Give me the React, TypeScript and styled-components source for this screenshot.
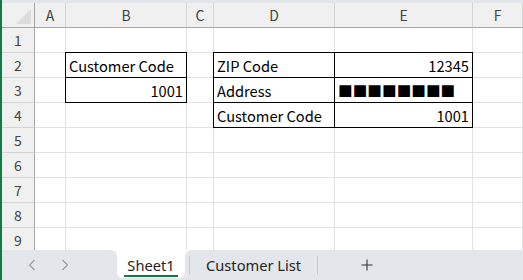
import { Fragment } from 'react';
import styled, { createGlobalStyle } from 'styled-components';

const colors = {
  excelGreen: '#107c41',
  chrome: '#e3e6ea',
  headerBg: '#f0f0f0',
  headerLine: '#a6a6a6',
  headerSep: '#d4d4d4',
  grid: '#e1e1e1',
  headerText: '#444444',
  cellText: '#000000',
  tabText: '#242424',
};

const GlobalStyle = createGlobalStyle`
  html, body {
    margin: 0;
    padding: 0;
    background: #ffffff;
  }
`;

const Window = styled.div`
  width: 523px;
  height: 280px;
  box-sizing: border-box;
  border-left: 2px solid ${colors.excelGreen};
  display: flex;
  flex-direction: column;
  overflow: hidden;
  background: #ffffff;
`;

const TopStrip = styled.div`
  height: 3px;
  background: ${colors.chrome};
`;

const Sheet = styled.div`
  flex: 1;
  display: grid;
  grid-template-columns: 33px 31px 121px 27px 121px 138px 1fr;
  grid-auto-rows: 25px;
  overflow: hidden;
  font-family: 'Noto Sans CJK JP', 'Noto Sans', sans-serif;
`;

const Corner = styled.div`
  position: relative;
  background: ${colors.headerBg};
  border-right: 1px solid ${colors.headerLine};
  border-bottom: 1px solid ${colors.headerLine};
  box-sizing: border-box;

  &::after {
    content: '';
    position: absolute;
    right: 3px;
    bottom: 3px;
    border-style: solid;
    border-width: 0 0 15px 15px;
    border-color: transparent transparent #dcdcdc transparent;
  }
`;

const ColHeader = styled.div`
  display: flex;
  align-items: center;
  justify-content: center;
  box-sizing: border-box;
  background: ${colors.headerBg};
  border-right: 1px solid ${colors.headerSep};
  border-bottom: 1px solid ${colors.headerLine};
  color: ${colors.headerText};
  font-size: 14px;
`;

const RowHeader = styled.div`
  display: flex;
  align-items: center;
  justify-content: center;
  box-sizing: border-box;
  background: ${colors.headerBg};
  border-right: 1px solid ${colors.headerLine};
  border-bottom: 1px solid ${colors.headerSep};
  color: ${colors.headerText};
  font-size: 14px;
`;

const Cell = styled.div<{ $boxed?: boolean; $align?: 'left' | 'right' }>`
  position: ${(p) => (p.$boxed ? 'relative' : 'static')};
  display: flex;
  align-items: center;
  justify-content: ${(p) => (p.$align === 'right' ? 'flex-end' : 'flex-start')};
  box-sizing: border-box;
  padding: 0 3px 0 3px;
  border-right: 1px solid ${colors.grid};
  border-bottom: 1px solid ${colors.grid};
  color: ${colors.cellText};
  font-size: 14.67px;
  white-space: nowrap;

  ${(p) =>
    p.$boxed &&
    `
    &::after {
      content: '';
      position: absolute;
      inset: -1px;
      border: 1px solid #000;
      pointer-events: none;
    }
  `}
`;

// white behind the rounded top corners, grey behind the active tab's rounded bottom
const TabBar = styled.div`
  height: 30px;
  display: flex;
  align-items: stretch;
  background: linear-gradient(to bottom, #ffffff 0 15px, ${colors.chrome} 15px);
  font-family: 'Noto Sans', 'Open Sans', sans-serif;
  font-size: 14.67px;
  color: ${colors.tabText};
`;

const NavArea = styled.div`
  width: 115px;
  background: ${colors.chrome};
  border-top-right-radius: 6px;
  display: flex;
  align-items: center;
  padding-left: 26px;
  gap: 25px;
  box-sizing: border-box;
`;

const ActiveTab = styled.div`
  width: 68px;
  margin-bottom: 2px;
  display: flex;
  justify-content: center;
  align-items: center;
  padding-top: 2px;
  background: #ffffff;
  border-radius: 0 0 6px 6px;
`;

const ActiveLabel = styled.span`
  position: relative;
  padding: 0 2px;

  &::after {
    content: '';
    position: absolute;
    left: -1px;
    right: -1px;
    bottom: -2px;
    height: 2px;
    background: ${colors.excelGreen};
  }
`;

const RestArea = styled.div`
  flex: 1;
  background: ${colors.chrome};
  border-top-left-radius: 6px;
  display: flex;
  align-items: center;
  padding-left: 4px;
`;

const Divider = styled.div`
  width: 1px;
  height: 18px;
  background: #c6c8cc;
`;

const Tab = styled.div`
  padding: 0 16px;
  display: flex;
  align-items: center;
`;

const AddButton = styled.div`
  width: 98px;
  display: flex;
  justify-content: center;
  align-items: center;
`;

const Chevron = ({ dir }: { dir: 'left' | 'right' }) => (
  <svg width="8" height="12" viewBox="0 0 8 12">
    <polyline
      points={dir === 'left' ? '6.5,1 1.5,6 6.5,11' : '1.5,1 6.5,6 1.5,11'}
      fill="none"
      stroke="#9b9b9b"
      strokeWidth="1.1"
    />
  </svg>
);

const Plus = () => (
  <svg width="12" height="12" viewBox="0 0 12 12">
    <path d="M6 0.5V11.5M0.5 6H11.5" stroke="#333" strokeWidth="1.1" fill="none" />
  </svg>
);

const COLUMNS = ['A', 'B', 'C', 'D', 'E', 'F'];
const ROWS = [1, 2, 3, 4, 5, 6, 7, 8, 9];

type CellData = { text: string; boxed?: boolean; align?: 'left' | 'right' };

const data: Record<string, CellData> = {
  B2: { text: 'Customer Code', boxed: true },
  B3: { text: '1001', boxed: true, align: 'right' },
  D2: { text: 'ZIP Code', boxed: true },
  E2: { text: '12345', boxed: true, align: 'right' },
  D3: { text: 'Address', boxed: true },
  E3: { text: '■■■■■■■■', boxed: true },
  D4: { text: 'Customer Code', boxed: true },
  E4: { text: '1001', boxed: true, align: 'right' },
};

export default function App() {
  return (
    <>
      <GlobalStyle />
      <Window>
        <TopStrip />
        <Sheet>
          <Corner />
          {COLUMNS.map((c) => (
            <ColHeader key={c}>{c}</ColHeader>
          ))}
          {ROWS.map((r) => (
            <Fragment key={r}>
              <RowHeader>{r}</RowHeader>
              {COLUMNS.map((c) => {
                const cell = data[`${c}${r}`];
                return (
                  <Cell key={c} $boxed={cell?.boxed} $align={cell?.align}>
                    {cell?.text}
                  </Cell>
                );
              })}
            </Fragment>
          ))}
        </Sheet>
        <TabBar>
          <NavArea>
            <Chevron dir="left" />
            <Chevron dir="right" />
          </NavArea>
          <ActiveTab>
            <ActiveLabel>Sheet1</ActiveLabel>
          </ActiveTab>
          <RestArea>
            <Divider />
            <Tab>Customer List</Tab>
            <Divider />
            <AddButton>
              <Plus />
            </AddButton>
          </RestArea>
        </TabBar>
      </Window>
    </>
  );
}
